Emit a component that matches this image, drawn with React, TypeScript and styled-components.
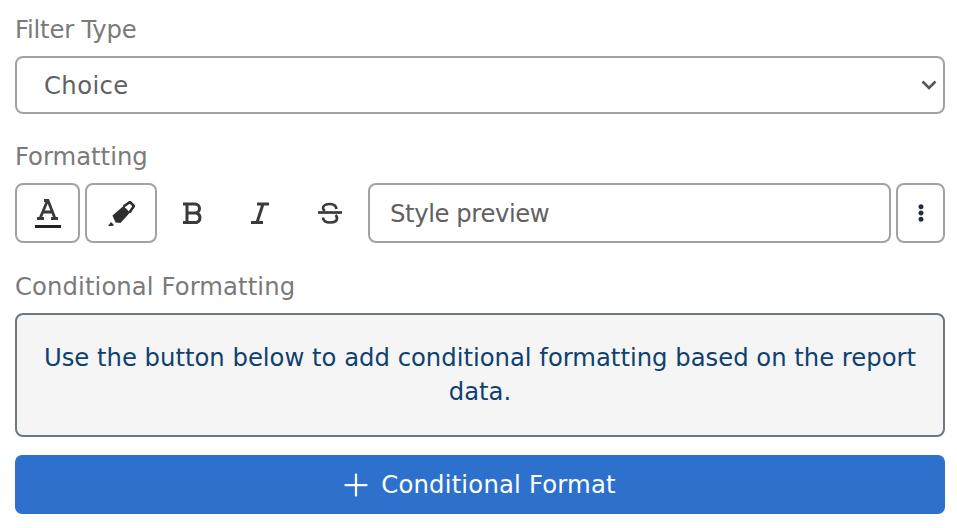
import React from 'react'
import styled, { createGlobalStyle } from 'styled-components'
import { FaEllipsisV } from 'react-icons/fa'
import { Plus } from 'lucide-react'

const chevron =
  "data:image/svg+xml,%3Csvg xmlns='http://www.w3.org/2000/svg' width='16' height='10' viewBox='0 0 16 10'%3E%3Cpath d='M1.5 1.5 8 8l6.5-6.5' fill='none' stroke='%23555' stroke-width='2.6'/%3E%3C/svg%3E"

const GlobalStyle = createGlobalStyle`
  html, body {
    margin: 0;
    background: #fff;
    font-family: 'DejaVu Sans', 'Inter', sans-serif;
  }
`

const Page = styled.div`
  display: flex;
  flex-direction: column;
  width: 957px;
  height: 528px;
  box-sizing: border-box;
  padding: 15px 12px 0 15px;
  overflow: hidden;
`

const Label = styled.label<{ $spacing: number }>`
  display: block;
  height: 29px;
  margin-bottom: 12px;
  line-height: 29px;
  font-size: 24.3px;
  letter-spacing: ${({ $spacing }) => $spacing}px;
  color: #7a7a7a;
`

const Select = styled.select`
  display: block;
  flex: none;
  width: 100%;
  height: 58px;
  margin-bottom: 28px;
  padding: 0 0 0 27px;
  box-sizing: border-box;
  appearance: none;
  border: 2px solid #a2a2a2;
  border-radius: 8px;
  background: #fff url("${chevron}") no-repeat right 6px center;
  font-family: inherit;
  font-size: 24.3px;
  letter-spacing: 0.4px;
  color: #616161;
`

const Toolbar = styled.div`
  display: flex;
  flex: none;
  gap: 5px;
  height: 60px;
  margin-bottom: 29px;
`

const ToolButton = styled.button<{ $width: number; $outlined?: boolean }>`
  display: flex;
  flex: none;
  align-items: center;
  justify-content: center;
  width: ${({ $width }) => $width}px;
  padding: 0;
  box-sizing: border-box;
  border: 2px solid ${({ $outlined }) => ($outlined ? '#a2a2a2' : 'transparent')};
  border-radius: 8px;
  background: #fff;
  color: #3a3a3a;
`

const Preview = styled.div`
  display: flex;
  flex: 1;
  align-items: center;
  padding-left: 20px;
  box-sizing: border-box;
  border: 2px solid #a2a2a2;
  border-radius: 8px;
  font-size: 24.3px;
  letter-spacing: -0.4px;
  color: #616161;
`

const Notice = styled.div`
  flex: none;
  display: flex;
  align-items: center;
  justify-content: center;
  height: 124px;
  margin-bottom: 18px;
  padding: 0 15px;
  box-sizing: border-box;
  border: 2px solid #6c7780;
  border-radius: 8px;
  background: #f5f5f5;
  text-align: center;
  line-height: 34px;
  font-size: 24.3px;
  color: #0f4170;
`

const AddButton = styled.button`
  display: flex;
  flex: none;
  align-items: center;
  justify-content: center;
  gap: 7px;
  width: 100%;
  height: 59px;
  padding: 0 6px 0 0;
  border: 0;
  border-radius: 7px;
  background: #2d71cd;
  font-family: inherit;
  font-size: 24.3px;
  letter-spacing: 0.2px;
  color: #fff;
`

const TextColorIcon = () => (
  <svg width="26" height="30" viewBox="0 0 26 30" fill="none" stroke="#3a3a3a" strokeWidth="2.8">
    <path d="M9 2.500h4L20 20.500M12.500 2.500 5 20.500M2 20.500h7M16 20.500h7M7.500 14h10" />
    <path d="M0 28.500h26" stroke="#222" strokeWidth="3" />
  </svg>
)

const HighlightIcon = () => (
  <svg width="27" height="25" viewBox="0 0 27 25" fill="none">
    <path d="M0 25l3-4 3 3-1.500 1z" fill="#2f2f2f" />
    <path d="M4.500 14.500 15.500 5 22 11.500 12.500 22 7.500 21.500z" fill="#2f2f2f" />
    <path d="M15.500 5.500 22 1l4 4-4.500 6.500" stroke="#2f2f2f" strokeWidth="2.6" />
  </svg>
)

const BoldIcon = () => (
  <svg width="20" height="22" viewBox="0 0 20 22" fill="none" stroke="#3a3a3a" strokeWidth="3">
    <path d="M0 2h12a4.500 4.500 0 0 1 0 9H4M4 11h9.500a5 5 0 0 1 0 9.500H0M4 2v18.500" />
  </svg>
)

const ItalicIcon = () => (
  <svg width="18" height="22" viewBox="0 0 18 22" fill="none" stroke="#3a3a3a" strokeWidth="3">
    <path d="M6 2h12M0 20.500h12M12 2 6 20.500" />
  </svg>
)

const StrikeIcon = () => (
  <svg width="24" height="22" viewBox="0 0 24 22" fill="none" stroke="#3a3a3a" strokeWidth="2.7">
    <path d="M0 10.500h24" />
    <path d="M18.500 7C18 3.500 15 2 12 2 8 2 5 3.500 5 6c0 1.500 1 2.500 2 3M17.500 13c1 .8 1.500 2 1.500 3.200 0 2.800-3 4.300-7 4.300-4 0-7-1.500-7-5" />
  </svg>
)

export default function App() {
  return (
    <>
      <GlobalStyle />
      <Page>
        <Label $spacing={-0.2}>Filter Type</Label>
        <Select defaultValue="choice">
          <option value="choice">Choice</option>
        </Select>
        <Label $spacing={0}>Formatting</Label>
        <Toolbar>
          <ToolButton $width={65} $outlined>
            <TextColorIcon />
          </ToolButton>
          <ToolButton $width={72} $outlined>
            <HighlightIcon />
          </ToolButton>
          <ToolButton $width={62}>
            <BoldIcon />
          </ToolButton>
          <ToolButton $width={62}>
            <ItalicIcon />
          </ToolButton>
          <ToolButton $width={67}>
            <StrikeIcon />
          </ToolButton>
          <Preview>Style preview</Preview>
          <ToolButton $width={49} $outlined>
            <FaEllipsisV size={18} color="#1f2d3d" />
          </ToolButton>
        </Toolbar>
        <Label $spacing={0.1}>Conditional Formatting</Label>
        <Notice>Use the button below to add conditional formatting based on the report data.</Notice>
        <AddButton>
          <Plus size={36} strokeWidth={1.5} />
          Conditional Format
        </AddButton>
      </Page>
    </>
  )
}
